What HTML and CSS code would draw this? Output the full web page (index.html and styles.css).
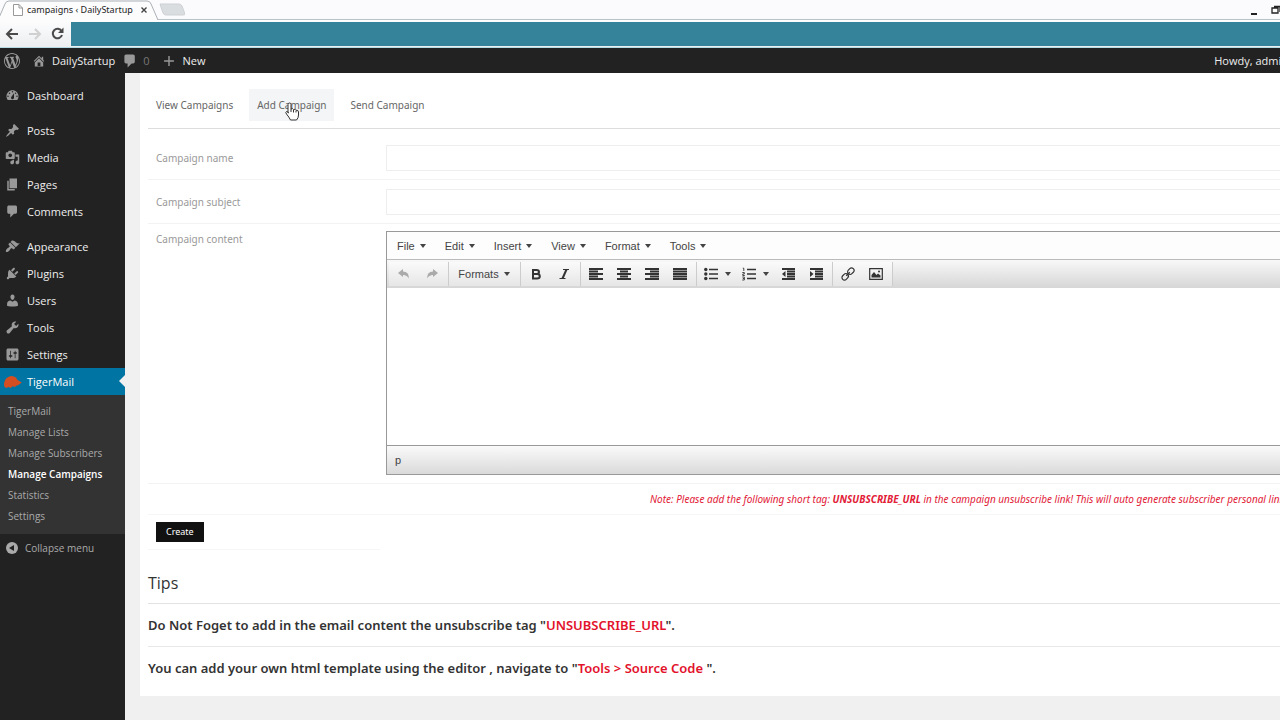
FILE: index.html
```html
<!DOCTYPE html>
<html lang="en">
<head>
<meta charset="utf-8">
<title>campaigns ‹ DailyStartup</title>
<link rel="stylesheet" href="styles.css">
</head>
<body>
<div class="browser">
  <header class="chrome">
    <div class="tab-strip">
      <div class="tab">
        <svg class="tab-shape" viewBox="0 0 160 20" preserveAspectRatio="none"><path d="M-2 20 5 4Q6 1 9 1H148Q151 1 152 4L159 20" fill="#fcfcfd" stroke="#aab0b4"/></svg>
        <svg class="tab-file" width="10" height="12" viewBox="0 0 10 12"><path d="M.5.5h5.500l3.500 3.500v7.500h-9zM6 .5V4h3.500" fill="#fff" stroke="#999"/></svg>
        <span class="tab-title">campaigns ‹ DailyStartup</span>
        <button class="tab-close" aria-label="Close tab"><svg width="6" height="6" viewBox="0 0 6 6"><path d="M.5.5l5 5M5.500.5l-5 5" stroke="#444" stroke-width="1.400"/></svg></button>
      </div>
      <svg class="new-tab" width="26" height="13" viewBox="0 0 26 13"><path d="M1 1h19q2 0 3 2l3 8q0 1-2 1H7q-2 0-3-2z" fill="#dadde0" stroke="#cdd1d4"/></svg>
      <div class="window-buttons">
        <button aria-label="Minimize"><svg width="8" height="10" viewBox="0 0 8 10"><path d="M1 9h6" stroke="#222" stroke-width="2"/></svg></button>
        <button aria-label="Restore"><svg width="10" height="10" viewBox="0 0 10 10"><path d="M1 3h6v5H1zM3 1.500h6V7" fill="none" stroke="#222" stroke-width="1.300"/></svg></button>
      </div>
    </div>
    <div class="nav-bar">
      <button aria-label="Back"><svg width="14" height="12" viewBox="0 0 14 12"><path d="M7 1 2 6l5 5M2 6h11" fill="none" stroke="#4a4a4a" stroke-width="2"/></svg></button>
      <button aria-label="Forward"><svg width="14" height="12" viewBox="0 0 14 12"><path d="M7 1l5 5-5 5M12 6H1" fill="none" stroke="#d0d0d0" stroke-width="2"/></svg></button>
      <button aria-label="Reload"><svg width="13" height="13" viewBox="0 0 13 13"><path d="M10.500 4A4.700 4.700 0 1 0 11 8" fill="none" stroke="#4a4a4a" stroke-width="2"/><path d="M12.500.5v5.500H7z" fill="#4a4a4a"/></svg></button>
      <div class="address"></div>
    </div>
  </header>

  <nav class="admin-bar" aria-label="Toolbar">
    <a href="#" class="wp-logo" aria-label="WordPress"><svg width="16" height="16" viewBox="0 0 20 20"><path d="M20 10c0-5.510-4.490-10-10-10C4.480 0 0 4.490 0 10c0 5.520 4.480 10 10 10 5.510 0 10-4.480 10-10zM7.780 15.370L4.370 6.220c.55-.02 1.170-.08 1.170-.08.5-.06.44-1.130-.06-1.110 0 0-1.450.11-2.370.11-.18 0-.37 0-.58-.01C4.120 2.690 6.870 1.110 10 1.110c2.330 0 4.450.87 6.050 2.340-.68-.11-1.650.39-1.650 1.580 0 .74.45 1.360.9 2.100.35.61.55 1.360.55 2.460 0 1.490-1.400 5-1.400 5l-3.030-8.370c.54-.02.82-.17.82-.17.5-.05.44-1.250-.06-1.220 0 0-1.440.12-2.380.12-.87 0-2.330-.12-2.330-.12-.5-.03-.56 1.200-.06 1.220l.92.08 1.260 3.410zM17.410 10c.24-.64.74-1.870.43-4.250.7 1.290 1.050 2.710 1.050 4.250 0 3.290-1.730 6.240-4.400 7.780.97-2.590 1.940-5.200 2.920-7.780zM6.100 18.090C3.120 16.650 1.110 13.530 1.110 10c0-1.300.23-2.480.72-3.590C3.250 10.300 4.670 14.200 6.100 18.090zm4.030-6.630l2.580 6.980c-.86.29-1.760.45-2.710.45-.79 0-1.570-.11-2.290-.33.81-2.380 1.620-4.740 2.420-7.100z"/></svg></a>
    <a href="#" class="site"><svg width="14" height="14" viewBox="0 0 20 20"><path d="M16 8.500l1.530 1.530-1.060 1.060L10 4.600l-6.470 6.470-1.060-1.060L10 2.470l4 4V4h2v4.500zm-6-2.460l6 5.990V18H4v-5.970zM12 17v-5H8v5h4z"/></svg>DailyStartup</a>
    <a href="#" class="bubble"><svg width="16" height="16" viewBox="0 0 20 20"><path d="M5 2h9c1.100 0 2 .9 2 2v7c0 1.100-.9 2-2 2h-2l-5 5v-5H5c-1.100 0-2-.9-2-2V4c0-1.100.9-2 2-2z"/></svg><span>0</span></a>
    <a href="#" class="new"><svg width="14" height="14" viewBox="0 0 20 20"><path d="M17 9v2h-6v6H9v-6H3V9h6V3h2v6h6z"/></svg>New</a>
    <a href="#" class="howdy">Howdy, admin</a>
  </nav>

  <div class="shell">
    <aside class="sidebar">
      <ul class="menu">
        <li><a href="#"><svg viewBox="0 0 20 20"><path fill-rule="evenodd" d="M3.760 16h12.480c1.100-1.370 1.760-3.110 1.760-5 0-4.420-3.580-8-8-8s-8 3.580-8 8c0 1.890.66 3.630 1.760 5zM10 4c.55 0 1 .45 1 1s-.45 1-1 1-1-.45-1-1 .45-1 1-1zM6 6c.55 0 1 .45 1 1s-.45 1-1 1-1-.45-1-1 .45-1 1-1zm8 0c.55 0 1 .45 1 1s-.45 1-1 1-1-.45-1-1 .45-1 1-1zm-5.370 5.550L12 7v6c0 1.100-.9 2-2 2s-2-.9-2-2c0-.57.24-1.080.63-1.450zM4 10c.55 0 1 .45 1 1s-.45 1-1 1-1-.45-1-1 .45-1 1-1zm12 0c.55 0 1 .45 1 1s-.45 1-1 1-1-.45-1-1 .45-1 1-1z"/></svg>Dashboard</a></li>
        <li class="first"><a href="#"><svg viewBox="0 0 20 20"><path d="M10.440 3.020l1.820-1.820 6.360 6.350-1.830 1.820c-1.050-.68-2.480-.57-3.410.36l-.75.75c-.92.93-1.040 2.350-.35 3.410l-1.830 1.820-2.410-2.410-2.800 2.790c-.42.42-3.380 2.710-3.800 2.290s1.860-3.390 2.280-3.810l2.790-2.790L4.100 9.360l1.830-1.820c1.050.69 2.480.57 3.400-.36l.75-.75c.93-.92 1.050-2.350.36-3.410z"/></svg>Posts</a></li>
        <li><a href="#"><svg viewBox="0 0 20 20"><path fill-rule="evenodd" d="M13 11V4c0-.55-.45-1-1-1h-1.670L9 1H5L3.670 3H2c-.55 0-1 .45-1 1v7c0 .55.45 1 1 1h10c.55 0 1-.45 1-1zM7 4.500c1.380 0 2.500 1.120 2.500 2.500S8.380 9.500 7 9.500 4.500 8.380 4.500 7 5.620 4.500 7 4.500zM14 6h5v10.500c0 1.380-1.120 2.500-2.500 2.500S14 17.880 14 16.500s1.120-2.500 2.500-2.500c.17 0 .34.02.5.05V9h-3V6zm-4 8.050V13h2v3.500c0 1.380-1.120 2.500-2.500 2.500S7 17.880 7 16.500 8.120 14 9.500 14c.17 0 .34.02.5.05z"/></svg>Media</a></li>
        <li><a href="#"><svg viewBox="0 0 20 20"><path d="M6 15V2h10v13H6zm-1 1h8v2H3V5h2v11z"/></svg>Pages</a></li>
        <li><a href="#"><svg viewBox="0 0 20 20"><path d="M5 2h9c1.100 0 2 .9 2 2v7c0 1.100-.9 2-2 2h-2l-5 5v-5H5c-1.100 0-2-.9-2-2V4c0-1.100.9-2 2-2z"/></svg>Comments</a></li>
        <li class="first"><a href="#"><svg viewBox="0 0 20 20"><path d="M14.480 11.060L7.410 3.990l1.500-1.500c.5-.56 2.300-.47 3.510.32 1.210.8 1.430 1.280 2.910 2.100 1.180.64 2.450 1.260 4.450.85zm-.71.71L6.700 4.700 4.930 6.470c-.39.39-.39 1.020 0 1.410l1.060 1.060c.39.39.39 1.030 0 1.420-.6.6-1.430 1.110-2.210 1.690-.35.26-.7.53-1.010.84C1.430 14.230.4 16.080 1.400 17.070c.99 1 2.840-.03 4.180-1.360.31-.31.58-.66.85-1.020.57-.78 1.080-1.610 1.690-2.210.39-.39 1.020-.39 1.410 0l1.060 1.060c.39.39 1.020.39 1.410 0z"/></svg>Appearance</a></li>
        <li><a href="#"><svg viewBox="0 0 20 20"><path d="M13.110 4.360L9.870 7.600 8 5.730l3.240-3.240c.35-.34 1.050-.2 1.560.32.52.51.66 1.210.31 1.550zm-8 1.770l.91-1.120 9.010 9.010-1.190.84c-.71.71-2.630 1.160-3.820 1.160H6.140L4.900 17.260c-.59.59-1.540.59-2.120 0-.59-.58-.59-1.530 0-2.120l1.240-1.240v-3.880c0-1.130.4-3.190 1.090-3.890zm7.260 3.970l3.240-3.240c.34-.35 1.040-.21 1.550.31.52.51.66 1.210.31 1.550l-3.240 3.250z"/></svg>Plugins</a></li>
        <li><a href="#"><svg viewBox="0 0 20 20"><path d="M10 9.250c-2.270 0-2.730-3.440-2.730-3.440C7 4.020 7.820 2 9.970 2c2.160 0 2.980 2.020 2.710 3.810 0 0-.41 3.440-2.680 3.440zm0 2.570L12.720 10c2.390 0 4.520 2.330 4.520 4.530v2.490s-3.650 1.130-7.240 1.130c-3.650 0-7.240-1.130-7.240-1.130v-2.490c0-2.250 1.940-4.480 4.470-4.480z"/></svg>Users</a></li>
        <li><a href="#"><svg viewBox="0 0 20 20"><path d="M16.680 9.770c-1.340 1.340-3.300 1.670-4.950.99l-5.410 6.520c-.99.99-2.590.99-3.580 0s-.99-2.590 0-3.570l6.520-5.420c-.68-1.650-.35-3.610.99-4.950 1.280-1.280 3.120-1.620 4.720-1.060l-2.890 2.890 2.820 2.820 2.860-2.870c.53 1.580.18 3.390-1.080 4.650z"/></svg>Tools</a></li>
        <li><a href="#"><svg viewBox="0 0 20 20"><path fill-rule="evenodd" d="M18 16V4c0-1.100-.9-2-2-2H4c-1.100 0-2 .9-2 2v12c0 1.100.9 2 2 2h12c1.100 0 2-.9 2-2zM8 11h1c.55 0 1 .45 1 1s-.45 1-1 1H8v1.500c0 .28-.22.5-.5.5s-.5-.22-.5-.5V13H6c-.55 0-1-.45-1-1s.45-1 1-1h1V5.500c0-.28.22-.5.5-.5s.5.22.5.5V11zm5-2h-1c-.55 0-1-.45-1-1s.45-1 1-1h1V5.500c0-.28.22-.5.5-.5s.5.22.5.5V7h1c.55 0 1 .45 1 1s-.45 1-1 1h-1v5.500c0 .28-.22.5-.5.5s-.5-.22-.5-.5V9z"/></svg>Settings</a></li>
        <li class="current"><a href="#"><svg class="tiger" viewBox="0 0 20 14"><path d="M1 12Q0 5 6 2q3-2 6 0l2 1 1 2 5 3-4 3q-3 0-3 2L10 12l-2 2-2-1-3 1z"/></svg>TigerMail</a></li>
      </ul>
      <ul class="submenu">
        <li><a href="#">TigerMail</a></li>
        <li><a href="#">Manage Lists</a></li>
        <li><a href="#">Manage Subscribers</a></li>
        <li><a href="#" class="active">Manage Campaigns</a></li>
        <li><a href="#">Statistics</a></li>
        <li><a href="#">Settings</a></li>
      </ul>
      <button class="collapse"><svg width="12" height="12" viewBox="0 0 12 12"><circle cx="6" cy="6" r="6" fill="#aaa"/><path d="M8 3v6L3 6z" fill="#222"/></svg>Collapse menu</button>
    </aside>

    <main class="content">
      <section class="panel">
        <nav class="tabs">
          <a href="#">View Campaigns</a>
          <a href="#" class="hover">Add Campaign<svg class="pointer" width="15" height="19" viewBox="0 0 15 19"><path d="M4.500 1q1.500 0 1.500 1.500V7q2-1 2.500.5 2-.7 2.500.7 2.500-.3 2.500 1.800V13q0 3-2 5H5.500Q4 15 1.500 12 0 10 1.500 9.500 2.500 9 3.500 11H3V2.500Q3 1 4.500 1z" fill="#fff" stroke="#333"/><path d="M6 7v3M8.500 8v2.500M11 8.500v2" stroke="#333"/></svg></a>
          <a href="#">Send Campaign</a>
        </nav>
        <form class="form">
          <div class="row"><label for="name">Campaign name</label><input id="name" type="text"></div>
          <div class="row"><label for="subject">Campaign subject</label><input id="subject" type="text"></div>
          <div class="row row-editor">
            <label for="body">Campaign content</label>
            <div class="editor">
              <div class="menubar">
                <button type="button">File<i class="caret"></i></button>
                <button type="button">Edit<i class="caret"></i></button>
                <button type="button">Insert<i class="caret"></i></button>
                <button type="button">View<i class="caret"></i></button>
                <button type="button">Format<i class="caret"></i></button>
                <button type="button">Tools<i class="caret"></i></button>
              </div>
              <div class="toolbar">
                <div class="group">
                  <button type="button" class="off" aria-label="Undo"><svg width="14" height="14" viewBox="0 0 14 14"><path d="M1 6l5-4v2.500q6 0 6 7Q10 8 6 8v2z" fill="currentColor"/></svg></button>
                  <button type="button" class="off" aria-label="Redo"><svg width="14" height="14" viewBox="0 0 14 14"><path d="M13 6L8 2v2.500q-6 0-6 7Q4 8 8 8v2z" fill="currentColor"/></svg></button>
                </div>
                <div class="group"><button type="button" class="formats">Formats<i class="caret"></i></button></div>
                <div class="group">
                  <button type="button" aria-label="Bold"><svg width="14" height="14" viewBox="0 0 14 14"><path d="M4 3h3.500q2.500 0 2.500 2T7.500 7H4h4q2.800 0 2.800 2.200T8 11.500H4z" fill="none" stroke="currentColor" stroke-width="2"/></svg></button>
                  <button type="button" aria-label="Italic"><svg width="14" height="14" viewBox="0 0 14 14"><path d="M6 2.500h6M2.500 11.500h6" stroke="currentColor"/><path d="M9.500 2.500l-4 9" stroke="currentColor" stroke-width="2"/></svg></button>
                </div>
                <div class="group aligns">
                  <button type="button" aria-label="Align left"><svg width="14" height="14" viewBox="0 0 14 14"><path d="M0 2h14M0 4.500h9M0 7h14M0 9.500h9M0 12h14" stroke="currentColor" stroke-width="1.800"/></svg></button>
                  <button type="button" aria-label="Align center"><svg width="14" height="14" viewBox="0 0 14 14"><path d="M0 2h14M3 4.500h8M0 7h14M3 9.500h8M0 12h14" stroke="currentColor" stroke-width="1.800"/></svg></button>
                  <button type="button" aria-label="Align right"><svg width="14" height="14" viewBox="0 0 14 14"><path d="M0 2h14M5 4.500h9M0 7h14M5 9.500h9M0 12h14" stroke="currentColor" stroke-width="1.800"/></svg></button>
                  <button type="button" aria-label="Justify"><svg width="14" height="14" viewBox="0 0 14 14"><path d="M0 2h14M0 4.500h14M0 7h14M0 9.500h14M0 12h14" stroke="currentColor" stroke-width="1.800"/></svg></button>
                </div>
                <div class="group">
                  <button type="button" class="split" aria-label="Bullet list"><svg width="14" height="14" viewBox="0 0 14 14"><path d="M5 2.500h9M5 7h9M5 11.500h9" stroke="currentColor" stroke-width="1.500"/><circle cx="1.800" cy="2.500" r="1.700"/><circle cx="1.800" cy="7" r="1.700"/><circle cx="1.800" cy="11.500" r="1.700"/></svg><i class="caret"></i></button>
                  <button type="button" class="split" aria-label="Numbered list"><svg width="14" height="14" viewBox="0 0 14 14"><path d="M5 2.500h9M5 7h9M5 11.500h9" stroke="currentColor" stroke-width="1.500"/><path d="M.8 1.200h1V4M.3 5.500h2V7h-1.500v1.500h2M.3 10h2v3h-2M.8 11.500h1.500" fill="none" stroke="currentColor" stroke-width=".9"/></svg><i class="caret"></i></button>
                  <button type="button" aria-label="Decrease indent"><svg width="14" height="14" viewBox="0 0 14 14"><path d="M1 2h13M6 4.500h8M6 7h8M6 9.500h8M1 12h13" stroke="currentColor" stroke-width="1.800"/><path d="M4.500 4v6L1 7z"/></svg></button>
                  <button type="button" aria-label="Increase indent"><svg width="14" height="14" viewBox="0 0 14 14"><path d="M1 2h13M6 4.500h8M6 7h8M6 9.500h8M1 12h13" stroke="currentColor" stroke-width="1.800"/><path d="M1 4v6l3.500-3z"/></svg></button>
                </div>
                <div class="group last">
                  <button type="button" aria-label="Insert link"><svg width="14" height="14" viewBox="0 0 14 14"><g fill="none" stroke="currentColor" stroke-width="1.200" transform="rotate(-45 7 7)"><rect x="-.5" y="4.500" width="7" height="5" rx="2.500"/><rect x="7.500" y="4.500" width="7" height="5" rx="2.500"/><path d="M4.500 7h5"/></g></svg></button>
                  <button type="button" aria-label="Insert image"><svg width="14" height="14" viewBox="0 0 14 14"><path d="M.7 1.700h12.600v10.600H.7z" fill="none" stroke="currentColor" stroke-width="1.200"/><path d="M2.500 10.500V8L5 5l2.500 3L9 6.500l2.500 2v2z"/><circle cx="10" cy="4.500" r="1"/></svg></button>
                </div>
              </div>
              <textarea id="body"></textarea>
              <div class="statusbar">p</div>
            </div>
          </div>
          <p class="note">Note: Please add the following short tag: <strong>UNSUBSCRIBE_URL</strong> in the campaign unsubscribe link! This will auto generate subscriber personal link.</p>
          <div class="submit"><button type="button">Create</button></div>
        </form>
        <h2>Tips</h2>
        <p class="tip">Do Not Foget to add in the email content the unsubscribe tag "<span>UNSUBSCRIBE_URL</span>".</p>
        <p class="tip">You can add your own html template using the editor , navigate to "<span>Tools &gt; Source Code </span>".</p>
      </section>
    </main>
  </div>
</div>
</body>
</html>
```

FILE: styles.css
```css
* { box-sizing: border-box; }
body { margin: 0; font: 11px/16px "Open Sans", sans-serif; background: #f0f0f0; color: #333; }
a { color: inherit; text-decoration: none; }
button { font: inherit; color: inherit; background: none; border: 0; padding: 0; }
ul { list-style: none; margin: 0; padding: 0; }
svg { display: block; flex: none; }

.browser { min-height: 100vh; display: flex; flex-direction: column; overflow: hidden; }

.chrome { background: #fbfafc; }
.tab-strip { height: 20px; display: flex; align-items: center; border-bottom: 1px solid #b9c3c8; }
.tab { position: relative; width: 159px; height: 20px; padding: 0 12px 0 13px; display: flex; align-items: center; font: 9px/16px "Noto Sans", sans-serif; color: #222; }
.tab-shape { position: absolute; left: 0; top: 0; width: 100%; height: 100%; }
.tab-file, .tab-title, .tab-close { position: relative; }
.tab-title { margin-left: 4px; white-space: nowrap; }
.tab-close { margin-left: auto; }
.window-buttons { margin-left: auto; margin-right: -1px; display: flex; gap: 13px; }
.nav-bar { height: 28px; display: flex; align-items: center; gap: 9px; padding-left: 5px; background: linear-gradient(#fdfdfe, #eceef0); border-bottom: 1px solid #b5dbe4; }
.address { flex: 1; height: 24px; margin-left: -2px; background: #34839b; }

.admin-bar { height: 25px; background: #222; color: #eee; display: flex; align-items: center; padding-left: 4px; overflow: hidden; white-space: nowrap; }
.admin-bar a { display: flex; align-items: center; gap: 6px; }
.admin-bar svg { fill: #999; }
.site { margin-left: 12px; }
.admin-bar .bubble { margin-left: 7px; gap: 5px; color: #777; }
.new { margin-left: 13px; }
.admin-bar .howdy { margin-left: auto; margin-right: -8px; }

.shell { flex: 1; display: flex; }
.sidebar { width: 125px; flex: none; background: #222; color: #eee; padding-top: 9px; }
.menu a { display: flex; align-items: center; gap: 7px; height: 27px; padding-left: 5px; }
.menu svg { width: 15px; height: 15px; fill: #999; }
.menu .first { margin-top: 8px; }
.current { position: relative; background: #0074a2; color: #fff; }
.menu .current a { gap: 5px; padding-left: 3px; }
.menu .tiger { width: 19px; height: 13px; fill: #d54e21; }
.current::after { content: ""; position: absolute; right: 0; top: 7px; border: 6px solid transparent; border-left: 0; border-right-color: #f0f0f0; }
.submenu { background: #333; color: #aaa; font-size: 10px; line-height: 21px; padding: 6px 0 7px 8px; white-space: nowrap; }
.submenu .active { color: #fff; font-weight: 600; }
.collapse { display: flex; align-items: center; gap: 7px; height: 27px; padding-left: 6px; color: #aaa; font-size: 10px; }

.content { flex: 1; min-width: 0; padding-left: 15px; }
.panel { background: #fff; padding: 16px 0 19px 8px; margin-bottom: 23px; }
.tabs { display: flex; gap: 8px; padding-bottom: 7px; border-bottom: 1px solid #ddd; color: #666; font: 10px/16px "Noto Sans", sans-serif; }
.tabs a { padding: 8px; position: relative; }
.tabs .hover { background: #f3f5f6; }
.pointer { position: absolute; left: 36px; top: 13px; }

.form { color: #999; padding-top: 7px; font: 10px/16px "Noto Sans", sans-serif; }
.row { display: grid; grid-template-columns: 238px 1fr; align-items: center; height: 44px; border-bottom: 1px solid #f3f3f3; }
.row label { padding-left: 8px; }
.row input { height: 26px; border: 1px solid #eee; border-right: 0; background: #fff; width: 100%; font: inherit; }
.row-editor { height: auto; align-items: start; padding: 7px 0 8px; }
.editor { border: 1px solid #999; border-right: 0; color: #444; font: 11px/16px "Liberation Sans", Arial, sans-serif; }
.menubar { height: 28px; display: flex; align-items: center; gap: 19px; padding-left: 10px; background: #fdfdfd; border-bottom: 1px solid #bbb; }
.caret { display: inline-block; border: 3px solid transparent; border-top: 4px solid #444; border-bottom: 0; margin-left: 5px; vertical-align: 2px; }
.toolbar { height: 28px; display: flex; align-items: center; padding-left: 2px; background: linear-gradient(#f8f8f8, #d6d6d6); }
.group { display: flex; height: 24px; padding: 0 2px 0 1px; border-right: 1px solid #ccc; background: linear-gradient(#fafafa, #e6e6e6); }
.group button { width: 28px; display: flex; align-items: center; justify-content: center; color: #333; }
.group svg { fill: currentColor; }
.group .off { color: #aaa; }
.group .formats { width: 68px; color: #444; }
.group .split { width: 38px; }
.group .split .caret { margin-left: 7px; }
.editor textarea { display: block; width: 100%; height: 157px; border: 0; padding: 8px; resize: none; background: #fff; font: inherit; }
.statusbar { height: 29px; padding: 6px 8px; border-top: 1px solid #999; background: linear-gradient(#fafafa, #dadada); }
.note { margin: 0; padding: 7px 0; padding-left: 502px; white-space: nowrap; overflow: hidden; color: #e22037; font-style: italic; border-bottom: 1px solid #f6f6f6; }
.submit { width: 232px; padding: 7px 8px; border-bottom: 1px solid #f6f6f6; }
.submit button { height: 20px; padding: 0 10px; background: #111; color: #fff; font: 9px/16px "Noto Sans", sans-serif; display: block; }
h2 { margin: 21px 0 0; padding-bottom: 8px; font-size: 16px; line-height: 24px; font-weight: 400; border-bottom: 1px solid #e2e2e2; }
.tip { margin: 0; padding: 12px 0; font: 600 13px/18px "Noto Sans", sans-serif; }
.tip + .tip { border-top: 1px solid #e8e8e8; padding-bottom: 0; }
.tip span { color: #e3122c; white-space: pre; }
```
